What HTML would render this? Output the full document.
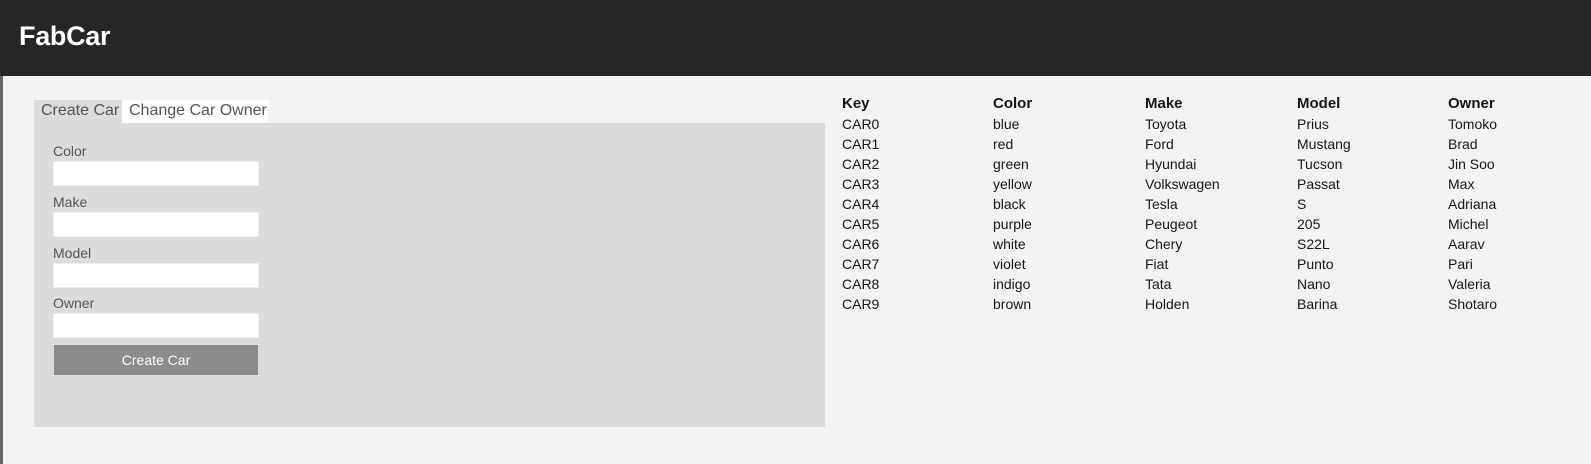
<!DOCTYPE html>
<html><head><style>
*{margin:0;padding:0;box-sizing:border-box}
body{width:1591px;height:464px;background:#f3f3f3;font-family:"Liberation Sans",sans-serif;color:#161616;position:relative;overflow:hidden}
.hdr{position:absolute;left:0;top:0;width:1591px;height:76px;background:#262626}
.hdr h1{position:absolute;left:19px;top:21px;font-size:27px;font-weight:bold;color:#fff;letter-spacing:-0.3px}
.strip{position:absolute;left:0;top:76px;width:3px;height:388px;background:#666}
.tab{position:absolute;top:100px;height:23px;font-size:16px;line-height:22px;color:#555;padding-left:7px}
.panel{position:absolute;left:34px;top:123px;width:791px;height:304px;background:#dcdcdc}
.lbl{position:absolute;left:53px;font-size:14px;color:#555}
.inp{position:absolute;left:53px;width:206px;height:25px;background:#fff;border:1px solid #eee}
.btn{position:absolute;left:54px;top:345px;width:204px;height:30px;background:#8c8c8c;color:#fff;font-size:14px;text-align:center;line-height:30px}
.col{position:absolute;top:94px;font-size:14px;line-height:20px}
.col b{display:block;font-size:15px}
</style></head><body>
<div class="hdr"><h1>FabCar</h1></div>
<div class="strip"></div>
<div class="tab" style="left:34px;width:88px;background:#dcdcdc">Create Car</div>
<div class="tab" style="left:122px;width:146px;background:#fff">Change Car Owner</div>
<div class="panel"></div>
<div class="lbl" style="top:143px">Color</div><div class="inp" style="top:161px"></div>
<div class="lbl" style="top:194px">Make</div><div class="inp" style="top:212px"></div>
<div class="lbl" style="top:245px">Model</div><div class="inp" style="top:263px"></div>
<div class="lbl" style="top:295px">Owner</div><div class="inp" style="top:313px"></div>
<div class="btn">Create Car</div>
<div class="col" style="left:842px"><b>Key</b>CAR0<br>CAR1<br>CAR2<br>CAR3<br>CAR4<br>CAR5<br>CAR6<br>CAR7<br>CAR8<br>CAR9</div>
<div class="col" style="left:993px"><b>Color</b>blue<br>red<br>green<br>yellow<br>black<br>purple<br>white<br>violet<br>indigo<br>brown</div>
<div class="col" style="left:1145px"><b>Make</b>Toyota<br>Ford<br>Hyundai<br>Volkswagen<br>Tesla<br>Peugeot<br>Chery<br>Fiat<br>Tata<br>Holden</div>
<div class="col" style="left:1297px"><b>Model</b>Prius<br>Mustang<br>Tucson<br>Passat<br>S<br>205<br>S22L<br>Punto<br>Nano<br>Barina</div>
<div class="col" style="left:1448px"><b>Owner</b>Tomoko<br>Brad<br>Jin Soo<br>Max<br>Adriana<br>Michel<br>Aarav<br>Pari<br>Valeria<br>Shotaro</div>
</body></html>
